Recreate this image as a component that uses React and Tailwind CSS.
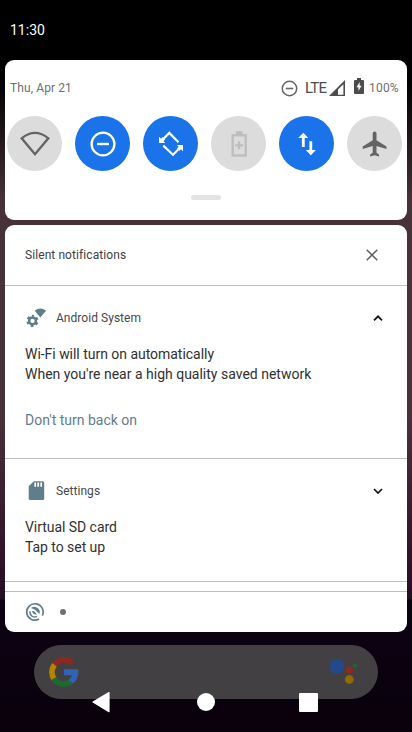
import React from "react";

const TILE = "w-[55px] h-[55px] rounded-full shrink-0";
const ON = "bg-[#1a73e8] text-white";
const OFF = "bg-[#dcdcdc] text-[#646464]";

function Tile({ on, children }) {
  return (
    <div className={`${TILE} ${on ? ON : OFF}`}>
      <svg viewBox="0 0 55 55" className="block h-full w-full">{children}</svg>
    </div>
  );
}

function QuickTiles() {
  return (
    <div className="flex gap-[13px] pl-[2px] mt-[15px]">
      <Tile>
        <path d="M14.7 22.3 Q28 11.5 41.3 22.3 L28 38.2 Z" fill="none" stroke="currentColor" strokeWidth="2.3" />
      </Tile>
      <Tile on>
        <circle cx="28" cy="28" r="11.4" fill="none" stroke="currentColor" strokeWidth="2.3" />
        <path d="M22 28h12" stroke="currentColor" strokeWidth="2.4" />
      </Tile>
      <Tile on>
        <path d="M19 24.200L26.300 16.900L35.500 26.200M20.300 29.600L30 38.800L37 31.800" fill="none" stroke="currentColor" strokeWidth="2.200" />
        <path d="M16 20.700l2 2 1.600-1.600 2.400 2.400-1.600 1.600 1.800 1.800H16z M40 35.200l-2-2-1.600 1.600-2.400-2.400 1.600-1.600-1.800-1.800H40z" fill="currentColor" />
      </Tile>
      <Tile>
        <g fill="none" stroke="#bebebe">
          <path d="M21.7 19.2h13v20.3h-13z" strokeWidth="2.4" />
          <path d="M25 16.7h6.6" strokeWidth="3" />
          <path d="M28.1 25.3v8M24.1 29.3h8" strokeWidth="2.3" />
        </g>
      </Tile>
      <Tile on>
        <path d="M24.300 16.700l5 5.200h-3.600v9h-2.800v-9h-3.700z M31.800 39.200l-5-5.200h3.600v-8.800h2.800V34h3.700z" fill="currentColor" />
      </Tile>
      <Tile>
        <path d="M39.5 33v-2.4l-10-6.3v-7a1.9 1.9 0 0 0-3.8 0v7l-10 6.3V33l10-3.1v6.8l-2.6 1.9v2l4.5-1.3 4.4 1.3v-2l-2.5-1.9v-6.8z" fill="currentColor" />
      </Tile>
    </div>
  );
}

function StatusIcons() {
  return (
    <div className="ml-auto flex h-5 items-center text-[#4c4c4c]">
      <svg viewBox="0 0 17 17" className="h-[17px] w-[17px]">
        <circle cx="8.5" cy="8.5" r="7.2" fill="none" stroke="#646464" strokeWidth="1.5" />
        <path d="M4.8 8.5h7.4" stroke="#646464" strokeWidth="1.6" />
      </svg>
      <span className="ml-[7px] w-[22px] text-[15px] leading-5 tracking-[-0.8px]">LTE</span>
      <svg viewBox="0 0 17 17" className="ml-[2px] h-[17px] w-[17px]">
        <path d="M0 16 L16 0 V16Z M9 14.700h5.400V4.200L9 9.400z" fill="currentColor" fillRule="evenodd" />
      </svg>
      <svg viewBox="0 0 10 16" className="ml-2 mb-[4px] h-4 w-[10px]">
        <path d="M3 0h4v2h2q1 0 1 1v12q0 1-1 1H1q-1 0-1-1V3q0-1 1-1h2z" fill="currentColor" />
        <path d="M5.7 4L2.5 9.2h2V13l3-5.2h-1.8z" fill="white" />
      </svg>
      <span className="ml-[5px] w-[30px] text-[12px] leading-5 tracking-[0.2px] text-[#6e6e6e]">100%</span>
    </div>
  );
}

function Chevron({ up }) {
  return (
    <svg viewBox="0 0 12 8" className="ml-auto h-2 w-3">
      <path d={up ? "M2 6.3L6 2.3l4 4" : "M2 2l4 4 4-4"} fill="none" stroke="#111" strokeWidth="1.7" />
    </svg>
  );
}

function WifiSettingsIcon() {
  return (
    <svg viewBox="0 0 22 22" className="h-[22px] w-[22px]" fill="#5f7d8a">
      <path d="M9.700 3.700Q15.300 -.6 21 3.700L15.300 10.600z" />
      <circle cx="7.500" cy="13.900" r="3.400" fill="none" stroke="#5f7d8a" strokeWidth="2.500" />
      <circle cx="7.500" cy="13.900" r="5.100" fill="none" stroke="#5f7d8a" strokeWidth="2" strokeDasharray="2.67 2.67" strokeDashoffset="1.33" transform="rotate(-90 7.5 13.9)" />
    </svg>
  );
}

function SdCardIcon() {
  return (
    <svg viewBox="0 0 22 22" className="h-[22px] w-[22px]">
      <path d="M8.800 1.200h8.900q1.500 0 1.500 1.500V18.500q0 1.500-1.500 1.500H5.200q-1.500 0-1.500-1.500V6.200z" fill="#5f7d8a" />
      <path d="M10.200 2.500v4.200M13.200 2.500v4.200M16.200 2.500v4.200" stroke="white" strokeWidth="1.700" />
    </svg>
  );
}

function AppHeader({ icon, name, up }) {
  return (
    <div className="flex h-[22px] items-center pr-[3px]">
      {icon}
      <span className="ml-[9px] text-[12px] tracking-[0.04px] text-[#484848]">{name}</span>
      <Chevron up={up} />
    </div>
  );
}

function GoogleG() {
  return (
    <svg viewBox="0 0 30 30" className="h-[30px] w-[30px]">
      <path d="M5.500 7.700A12 12 0 0 1 23.500 6.200" fill="none" stroke="#8a2a22" strokeWidth="5.800" />
      <path d="M5.300 22.200A12 12 0 0 1 5.500 7.700" fill="none" stroke="#b58500" strokeWidth="5.800" />
      <path d="M22.500 24.200A12 12 0 0 1 4.800 21.500" fill="none" stroke="#1d6a30" strokeWidth="5.800" />
      <path d="M15 12.300H29.300Q30 21.500 24.300 26.500L19.600 22.900Q22.300 21 23 18.200H15z" fill="#3262b4" />
    </svg>
  );
}

export default function App() {
  return (
    <div className="relative flex h-[732px] w-[412px] flex-col overflow-hidden bg-[linear-gradient(180deg,#000_0,#000_80px,#2d2025_160px,#48323a_200px,#48323a_410px,#30122a_560px,#250d25_599px,#0c0212_600px,#0a010d_732px)] font-[Roboto,sans-serif] text-[#303030]">
      <header className="flex h-[60px] shrink-0 items-center pl-[10px] text-[14px] text-white">11:30</header>

      <section className="mx-[5px] flex h-[160px] shrink-0 flex-col rounded-[9px] bg-white">
        <div className="mt-[18px] flex h-5 items-center pl-[5px] pr-2">
          <span className="text-[12px] tracking-[0.1px] text-[#6e6e6e]">Thu, Apr 21</span>
          <StatusIcons />
        </div>
        <div className="mt-[3px]"><QuickTiles /></div>
        <div className="mx-auto mt-6 h-[5px] w-[30px] rounded-full bg-[#e3e3e3]" />
      </section>

      <section className="mx-[5px] mt-[5px] flex h-[407px] shrink-0 flex-col rounded-[9px] bg-white">
        <div className="flex h-[61px] shrink-0 items-center border-b border-[#bdbdbd] pl-5 pr-[29px]">
          <span className="text-[12px] tracking-[0.08px] text-[#404040]">Silent notifications</span>
          <svg viewBox="0 0 12 12" className="ml-auto h-3 w-3">
            <path d="M.7.7l10.600 10.600M11.300.7L.7 11.300" stroke="#5c6064" strokeWidth="1.500" />
          </svg>
        </div>
        <article className="h-[173px] shrink-0 border-b border-[#bdbdbd] px-5 pt-[21px]">
          <AppHeader icon={<WifiSettingsIcon />} name="Android System" up />
          <div className="mt-[15px] text-[14px] leading-5">
            <p className="tracking-[-0.03px]">Wi-Fi will turn on automatically</p>
            <p>When you're near a high quality saved network</p>
          </div>
          <button className="mt-[26px] block text-[14px] leading-5 text-[#5f7d8a]">Don't turn back on</button>
        </article>
        <article className="h-[123px] shrink-0 border-b border-[#bdbdbd] px-5 pt-[21px]">
          <AppHeader icon={<SdCardIcon />} name="Settings" />
          <div className="mt-[15px] text-[14px] leading-5 tracking-[-0.05px]">
            <p>Virtual SD card</p>
            <p>Tap to set up</p>
          </div>
        </article>
        <div className="mt-[9px] flex h-[41px] items-center border-t border-[#bdbdbd] pl-5">
          <svg viewBox="0 0 20 20" className="h-5 w-5" fill="none" stroke="#5f7d8a">
            <path d="M14 17.100A8.200 8.200 0 1 1 17.300 13.600" strokeWidth="1.700" />
            <path d="M12 14.500A5 5 0 0 1 5 9" strokeWidth="1.300" />
            <path d="M6 6Q9.500 3.300 13 6.200 15.800 9 14.300 12L10 7.800z" fill="#5f7d8a" stroke="none" />
            <path d="M7 9L9.200 9.300 12 12.500Q8 13 7 9z" fill="#5f7d8a" stroke="none" />
          </svg>
          <span className="ml-[15px] h-[6px] w-[6px] rounded-full bg-[#707070]" />
        </div>
      </section>

      <div className="mx-[34px] mt-[13px] flex h-[54px] shrink-0 items-center justify-between rounded-full bg-[#424042] pl-[15px] pr-5">
        <GoogleG />
        <svg viewBox="0 0 30 28" className="h-7 w-[30px]">
          <circle cx="8.700" cy="8.500" r="7.500" fill="#24488a" />
          <circle cx="21.300" cy="12.200" r="3.800" fill="#8a2a22" />
          <circle cx="21.300" cy="21.500" r="4.400" fill="#936a00" />
          <circle cx="27" cy="7.800" r="2" fill="#1d6a30" />
        </svg>
      </div>

      <nav className="absolute inset-x-0 top-[691px] flex h-[22px] items-center pl-[92px]">
        <svg viewBox="0 0 18 22" className="h-[22px] w-[18px]">
          <path d="M1 11L17 1.600V20.700z" fill="white" stroke="white" strokeWidth="1.200" strokeLinejoin="round" />
        </svg>
        <span className="ml-[87px] h-[18px] w-[18px] rounded-full bg-white" />
        <span className="ml-[84px] mt-[1px] h-[19px] w-[19px] rounded-[1px] bg-white" />
      </nav>
    </div>
  );
}
